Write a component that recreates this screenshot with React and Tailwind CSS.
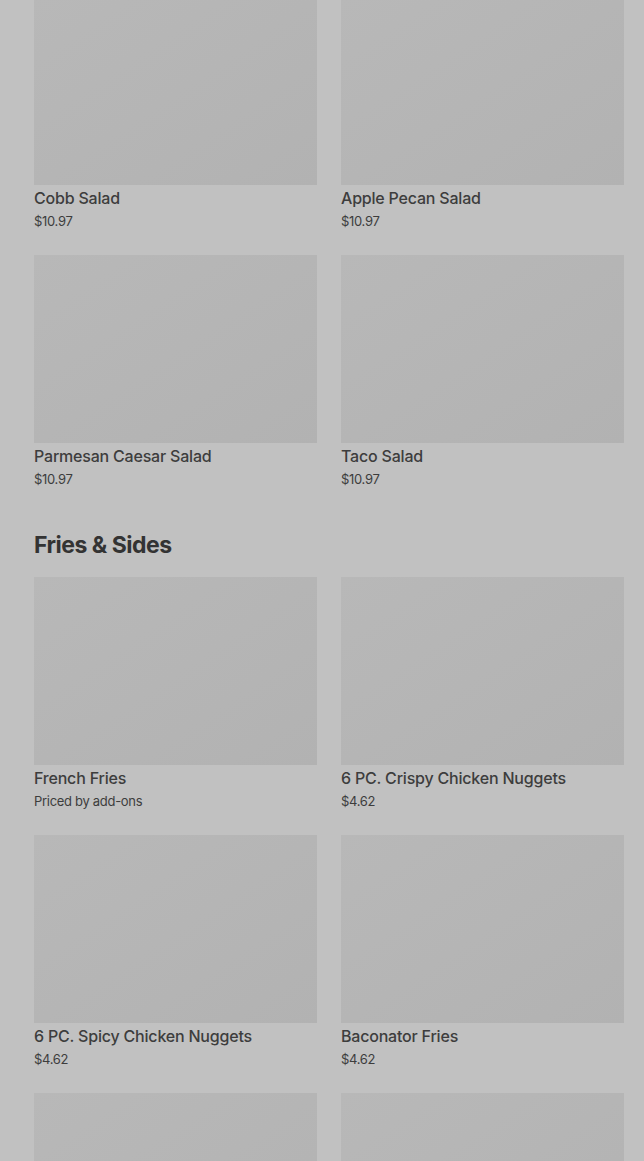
import React from 'react';

const salads = [
    { name: 'Cobb Salad', price: '$10.97' },
    { name: 'Apple Pecan Salad', price: '$10.97' },
    { name: 'Parmesan Caesar Salad', price: '$10.97' },
    { name: 'Taco Salad', price: '$10.97' },
];

const sides = [
    { name: 'French Fries', price: 'Priced by add-ons' },
    { name: '6 PC. Crispy Chicken Nuggets', price: '$4.62' },
    { name: '6 PC. Spicy Chicken Nuggets', price: '$4.62' },
    { name: 'Baconator Fries', price: '$4.62' },
    { name: null },
    { name: null },
];

function Item({ item }) {
    return (
        <div className="flex flex-col pb-[2px]">
            <div className="h-[188px] bg-gradient-to-br from-[#b8b8b8] to-[#b2b2b2]"></div>
            {item.name && (
                <>
                    <div className="mt-[3px] text-[16px] leading-[20px] font-medium tracking-[-0.2px] text-[#3d3d3d] truncate">{item.name}</div>
                    <div className="mt-[5px] text-[13px] leading-[16px] text-[#3d3d3d] tracking-[-0.3px]">{item.price}</div>
                </>
            )}
        </div>
    );
}

export default function App() {
    return (
        <div className="h-[1161px] w-[644px] overflow-hidden bg-[#c1c1c1]" style={{ fontFamily: 'Inter, "Noto Sans", sans-serif' }}>
            <div className="-mt-[3px] pl-[34px] pr-[20px]">
                <div className="grid grid-cols-2 gap-x-[24px] gap-y-[24px]">
                    {salads.map((s) => <Item key={s.name} item={s} />)}
                </div>
                <h2 className="mt-[40px] mb-[16px] text-[23px] leading-[32px] font-bold tracking-[-0.5px] text-[#333]">Fries &amp; Sides</h2>
                <div className="grid grid-cols-2 gap-x-[24px] gap-y-[24px]">
                    {sides.map((s, i) => <Item key={i} item={s} />)}
                </div>
            </div>
        </div>
    );
}
